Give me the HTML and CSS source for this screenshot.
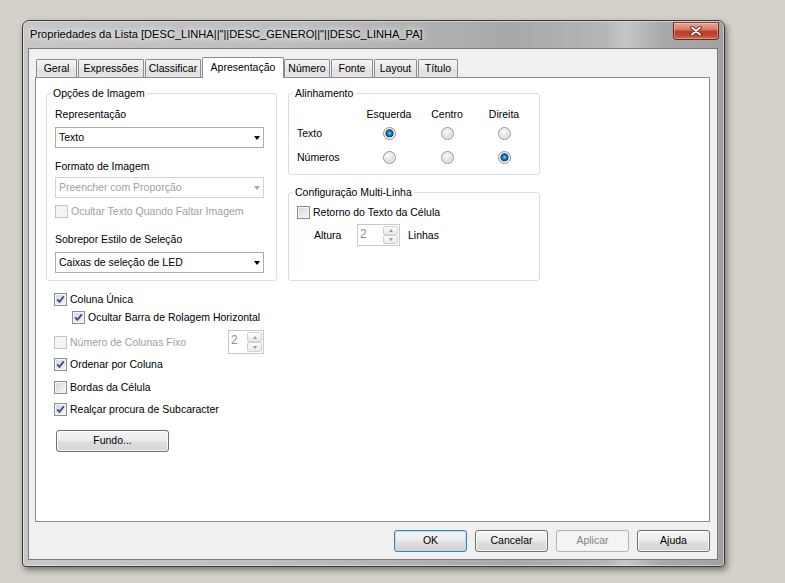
FILE: index.html
```html
<!DOCTYPE html>
<html lang="pt">
<head>
<meta charset="utf-8">
<title>Propriedades da Lista</title>
<link rel="stylesheet" href="styles.css">
</head>
<body>
<div class="window">
  <div class="titlebar">
    <span class="title">Propriedades da Lista [DESC_LINHA||"||DESC_GENERO||"||DESC_LINHA_PA]</span>
    <div class="close"><svg width="12" height="10" viewBox="0 0 12 10"><path d="M2 1.5 L10 8.5 M10 1.5 L2 8.5" stroke="#4a1c14" stroke-width="3.6" stroke-linecap="round"/><path d="M2 1.5 L10 8.5 M10 1.5 L2 8.5" stroke="#ffffff" stroke-width="1.9" stroke-linecap="round"/></svg></div>
  </div>
  <div class="client">
    <div class="tabs">
      <div class="tab w-geral">Geral</div>
      <div class="tab w-expr">Expressões</div>
      <div class="tab w-class">Classificar</div>
      <div class="tab sel w-apres">Apresentação</div>
      <div class="tab w-num">Número</div>
      <div class="tab w-fonte">Fonte</div>
      <div class="tab w-layout">Layout</div>
      <div class="tab w-titulo">Título</div>
    </div>
    <div class="panel">
      <div class="col-left">
        <fieldset class="group g-img">
          <legend>Opções de Imagem</legend>
          <div class="lbl l1">Representação</div>
          <div class="select s1"><span>Texto</span><i class="arrow"></i></div>
          <div class="lbl l2">Formato de Imagem</div>
          <div class="select s2 disabled"><span>Preencher com Proporção</span><i class="arrow"></i></div>
          <div class="chk c-ocultar disabled"><span class="cb"></span>Ocultar Texto Quando Faltar Imagem</div>
          <div class="lbl l3">Sobrepor Estilo de Seleção</div>
          <div class="select s3"><span>Caixas de seleção de LED</span><i class="arrow"></i></div>
        </fieldset>
        <div class="row r1"><span class="cb on"><svg viewBox="0 0 13 13" width="13" height="13"><path d="M3.2 6.4 L5.5 8.9 L9.8 3.4" fill="none" stroke="#3b5186" stroke-width="1.9"/></svg></span>Coluna Única</div>
        <div class="row r2"><span class="cb on"><svg viewBox="0 0 13 13" width="13" height="13"><path d="M3.2 6.4 L5.5 8.9 L9.8 3.4" fill="none" stroke="#3b5186" stroke-width="1.9"/></svg></span>Ocultar Barra de Rolagem Horizontal</div>
        <div class="row r3 disabled"><span class="cb"></span>Número de Colunas Fixo<div class="spin sp-cols"><span class="val">2</span><span class="btns"><span class="sb"><i class="up"></i></span><span class="sb"><i class="down"></i></span></span></div></div>
        <div class="row r4"><span class="cb on"><svg viewBox="0 0 13 13" width="13" height="13"><path d="M3.2 6.4 L5.5 8.9 L9.8 3.4" fill="none" stroke="#3b5186" stroke-width="1.9"/></svg></span>Ordenar por Coluna</div>
        <div class="row r5"><span class="cb"></span>Bordas da Célula</div>
        <div class="row r6"><span class="cb on"><svg viewBox="0 0 13 13" width="13" height="13"><path d="M3.2 6.4 L5.5 8.9 L9.8 3.4" fill="none" stroke="#3b5186" stroke-width="1.9"/></svg></span>Realçar procura de Subcaracter</div>
        <div class="btn fundo">Fundo...</div>
      </div>
      <div class="col-right">
        <fieldset class="group g-align">
          <legend>Alinhamento</legend>
          <div class="agrid">
            <span></span><span class="hd">Esquerda</span><span class="hd">Centro</span><span class="hd">Direita</span>
            <span class="rl">Texto</span><span class="rc"><i class="radio on"></i></span><span class="rc"><i class="radio"></i></span><span class="rc"><i class="radio"></i></span>
            <span class="rl">Números</span><span class="rc"><i class="radio"></i></span><span class="rc"><i class="radio"></i></span><span class="rc"><i class="radio on"></i></span>
          </div>
        </fieldset>
        <fieldset class="group g-multi">
          <legend>Configuração Multi-Linha</legend>
          <div class="chk c-retorno"><span class="cb"></span>Retorno do Texto da Célula</div>
          <div class="altura">
            <span class="alt-lbl">Altura</span>
            <div class="spin sp-alt"><span class="val">2</span><span class="btns"><span class="sb"><i class="up"></i></span><span class="sb"><i class="down"></i></span></span></div>
            <span class="lin-lbl">Linhas</span>
          </div>
        </fieldset>
      </div>
    </div>
    <div class="actions">
      <div class="btn default">OK</div>
      <div class="btn">Cancelar</div>
      <div class="btn disabled">Aplicar</div>
      <div class="btn">Ajuda</div>
    </div>
  </div>
</div>
</body>
</html>
```

FILE: styles.css
```css
* { box-sizing: border-box; }
html, body { margin: 0; padding: 0; }
body {
  background: #d5d1ca;
  width: 785px;
  height: 583px;
  overflow: hidden;
  font-family: "Liberation Sans", Arial, sans-serif;
  font-size: 10.5px;
  line-height: 15px;
  color: #000;
}

.window {
  margin: 20px 0 0 22px;
  width: 703px;
  height: 547px;
  border: 1px solid #3c3c3c;
  border-radius: 7px 7px 4px 4px;
  padding: 0 6px 6px 5px;
  display: flex;
  flex-direction: column;
  background: linear-gradient(to right, #c7c7c7 0%, #bcbcbc 40%, #a8a8a8 70%, #b6b6b6 83%, #c6c6c6 86%, #a9a9a9 91%, #a2a2a2 100%);
  box-shadow: 2px 3px 6px rgba(0,0,0,.45), inset 0 0 0 1px rgba(255,255,255,.4);
}
.titlebar { height: 27px; display: flex; align-items: flex-start; flex: none; }
.title {
  padding-left: 2px;
  line-height: 27px;
  font-size: 11.1px;
  white-space: nowrap;
  text-shadow: 0 0 6px #fff, 0 0 10px rgba(255,255,255,.8);
}
.close {
  margin-left: auto;
  margin-top: 1px;
  margin-right: -1px;
  width: 46px;
  height: 18px;
  border: 1px solid #6d2a20;
  border-top-color: #8a4a40;
  border-radius: 0 0 4px 4px;
  background: linear-gradient(#eaa898 0%, #d97a66 40%, #c13f28 52%, #c04530 75%, #d06e58 100%);
  display: flex;
  align-items: center;
  justify-content: center;
  box-shadow: inset 0 0 0 1px rgba(255,220,210,.35);
}
.client {
  flex: 1;
  border: 1px solid #7a7a7a;
  background: #f0f0f0;
  padding: 8px 7px 0 6px;
  display: flex;
  flex-direction: column;
}
.tabs { display: flex; align-items: flex-end; height: 20px; padding-left: 1px; position: relative; z-index: 1; flex: none; }
.tab {
  height: 18px;
  border: 1px solid #898c95;
  border-bottom: none;
  border-radius: 2px 2px 0 0;
  margin-right: 1px;
  background: linear-gradient(#f4f4f4, #eaeaea 50%, #dfdfdf 51%, #e6e6e6);
  line-height: 17px;
  text-align: center;
  white-space: nowrap;
}
.tab.sel { height: 21px; margin-bottom: -1px; background: #fff; margin-right: 0; line-height: 19px; }
.w-geral { width: 41px; }
.w-expr { width: 66px; }
.w-class { width: 56px; }
.w-apres { width: 82px; }
.w-num { width: 46px; }
.w-fonte { width: 42px; }
.w-layout { width: 43px; }
.w-titulo { width: 40px; }

.panel {
  height: 445px;
  flex: none;
  border: 1px solid #898c95;
  background: #fff;
  display: flex;
  gap: 11px;
  padding: 8px 0 0 10px;
}
.col-left { width: 231px; display: flex; flex-direction: column; }
.col-right { width: 252px; display: flex; flex-direction: column; }

.group {
  margin: 0;
  border: 1px solid #d5dfe5;
  border-radius: 3px;
  padding: 0 12px 7px 8px;
  min-width: 0;
}
.group legend { padding: 0 2px; margin-left: -4px; line-height: 15px; }
.lbl { line-height: 15px; }
.l1 { margin-top: 6px; }
.l2 { margin-top: 11px; }
.l3 { margin-top: 13px; }
.select {
  height: 21px;
  border: 1px solid #acacac;
  background: #fff;
  display: flex;
  align-items: center;
  padding-left: 3px;
}
.select .arrow {
  margin-left: auto;
  margin-right: 3px;
  width: 0; height: 0;
  border-top: 4px solid #000;
  border-left: 3.5px solid transparent;
  border-right: 3.5px solid transparent;
}
.select.disabled { border-color: #d3d3d3; color: #a0a0a0; }
.select.disabled .arrow { border-top-color: #a6a6a6; }
.s1 { margin-top: 5px; }
.s2 { margin-top: 3px; }
.s3 { margin-top: 5px; }

.chk, .row { display: flex; align-items: center; white-space: nowrap; }
.chk { height: 15px; }
.c-ocultar { margin-top: 6px; }
.cb {
  width: 13px; height: 13px; flex: none;
  border: 1px solid #8e8f8f;
  background: linear-gradient(135deg, #d3d6da, #f7f7f7);
  box-shadow: inset 0 0 0 1px #f4f4f4;
  margin-right: 3px;
  display: block;
}
.cb svg { display: block; margin: -1px; }
.disabled { color: #a0a0a0; }
.disabled .cb { border-color: #c5c5c5; background: #f4f4f4; }

.row { padding-left: 8px; padding-right: 13px; height: 16px; }
.r1 { margin-top: 10px; }
.r2 { margin-top: 2px; padding-left: 26px; }
.r3 { margin-top: 5px; height: 24px; }
.r4 { margin-top: 2px; }
.r5 { margin-top: 7px; }
.r6 { margin-top: 6px; }

.spin {
  display: flex;
  border: 1px solid #c8c8c8;
  background: #fff;
  color: #8d8d8d;
}
.spin .val { flex: 1; padding-left: 2px; font-size: 12px; line-height: 18px; }
.spin .btns { display: flex; flex-direction: column; width: 15px; margin: 1px; gap: 0; }
.sb {
  flex: 1;
  border: 1px solid #d2d2d2;
  border-radius: 2px;
  background: linear-gradient(#fbfbfb, #e9e9e9);
  display: flex; align-items: center; justify-content: center;
}
.sb .up { width: 0; height: 0; border-bottom: 3px solid #9a9a9a; border-left: 2.5px solid transparent; border-right: 2.5px solid transparent; }
.sb .down { width: 0; height: 0; border-top: 3px solid #9a9a9a; border-left: 2.5px solid transparent; border-right: 2.5px solid transparent; }
.sp-cols { margin-left: auto; width: 36px; height: 24px; }
.sp-alt { width: 43px; height: 22px; }

.btn {
  height: 22px;
  width: 73px;
  border: 1px solid #707070;
  border-radius: 3px;
  background: linear-gradient(#f3f3f3 0%, #ececec 50%, #e0e0e0 51%, #d4d4d4 100%);
  box-shadow: inset 0 0 0 1px rgba(255,255,255,.75);
  text-align: center;
  line-height: 19px;
  color: #000;
}
.btn.default { border-color: #3c7fb1; box-shadow: inset 0 0 0 1px #b9def4; }
.btn.disabled { border-color: #adb2b5; background: #f4f4f4; color: #838383; box-shadow: none; }
.fundo { width: 113px; margin-top: 13px; margin-left: 10px; }

.agrid {
  display: grid;
  grid-template-columns: 63px 58px 58px 56px;
  grid-template-rows: 18px 20px 28px;
  margin-top: 4px;
  align-items: center;
}
.hd, .rc { text-align: center; justify-self: center; }
.rc { display: flex; }
.g-align { padding-bottom: 3px; }
.radio {
  display: block;
  width: 13px; height: 13px;
  border-radius: 50%;
  border: 1px solid #939393;
  background: radial-gradient(circle at 40% 35%, #fdfdfd, #d3d3d3 75%);
  box-shadow: inset 0 0 0 1px #f2f2f2;
}
.radio.on {
  background: radial-gradient(circle at 50% 48%, #8fd6f5 0, #2c8dc4 1.5px, #1d6592 2.8px, #0f3a58 3.7px, #c9d0d5 4.3px, #e9e9e9 5px, #fbfbfb 6px);
}
.g-multi { margin-top: 10px; padding-bottom: 34px; }
.c-retorno { margin-top: 5px; }
.altura { display: flex; align-items: center; margin-top: 4px; height: 22px; }
.alt-lbl { padding-left: 17px; width: 60px; }
.lin-lbl { margin-left: 8px; }

.actions { display: flex; justify-content: flex-end; gap: 8px; margin-top: 8px; flex: none; }
```
